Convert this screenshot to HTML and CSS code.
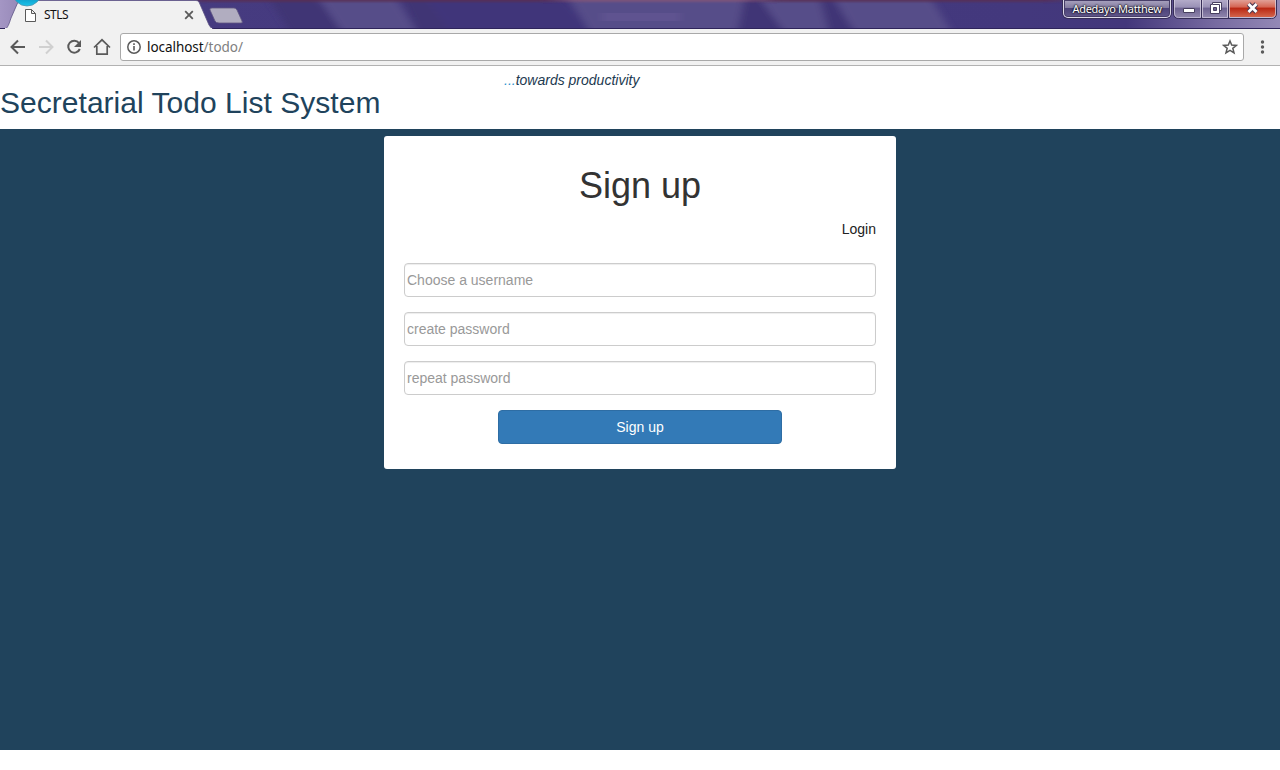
FILE: index.html
```html
<!DOCTYPE html>
<html lang="en">
<head>
<meta charset="utf-8">
<title>STLS</title>
<link rel="stylesheet" href="styles.css">
</head>
<body>
<div class="titlebar">
  <svg class="frame" width="1280" height="29" viewBox="0 0 1280 29">
    <defs>
      <filter id="soft" x="-10%" y="-50%" width="120%" height="200%"><feGaussianBlur stdDeviation="4 0.5"/></filter>
      <filter id="edge" x="-10%" y="-200%" width="120%" height="500%"><feGaussianBlur stdDeviation="12 1.300"/></filter>
      <linearGradient id="base"><stop offset="0" stop-color="#a496c4"/><stop offset=".02" stop-color="#9284b4"/><stop offset=".12" stop-color="#463b80"/><stop offset=".8" stop-color="#43387d"/><stop offset=".88" stop-color="#43377b"/><stop offset=".95" stop-color="#776ba1"/><stop offset="1" stop-color="#9388b6"/></linearGradient>
      <linearGradient id="orb" x2="0" y2="1"><stop offset=".5" stop-color="#0878a8"/><stop offset="1" stop-color="#18c4ec"/></linearGradient>
    </defs>
    <path fill="url(#base)" d="M0 0h1280v29H0z"/>
    <g filter="url(#soft)">
      <path fill="#3f3474" d="M270 0h48l22 29h-52zM402 0h24l22 29h-32z"/>
      <path fill="#41367a" d="M426 0h140l22 29H448z"/>
      <path fill="#574d89" d="M320 0h77l18 29h-75zM570 0h174l4 29H588zM761 0h64l14 29h-58zM835 0h97l18 29h-98z"/>
      <path fill="#403476" d="M744 0h16l22 29h-44zM820 0h13l20 29h-25z"/>
      <path fill="#675798" opacity=".5" d="M602 13h78v8h-78z"/>
    </g>
    <path filter="url(#edge)" fill="#5b2d4f" opacity=".75" d="M190-2h370v4H190zM760-2h300v4H760z"/>
    <path filter="url(#edge)" fill="#925973" opacity=".6" d="M560-2h200v4H560z"/>
    <path fill="#2e245b" d="M0 28h1280v1H0z"/>
    <path fill="#f1f1f1" stroke="#5d5385" stroke-width=".8" d="M4 30C8 28 9 24 11 18L18 2Q19 .5 21 .5H196Q198 .5 199 2L209 25Q211 29 215 30z"/>
    <path fill="#f1f1f1" d="M5 28h207v1H5z"/>
    <circle cx="27" cy="-8.500" r="14.500" fill="url(#orb)" stroke="#4a93ad" stroke-width=".8"/>
    <path fill="#b1adc0" stroke="#605681" stroke-width=".8" d="M212 8h22q2 0 3 2l5 11q1 2-1 2h-22q-3 0-4-2l-5-11q-.8-2 2-2z"/>
    <path fill="#fff" stroke="#5a5a5a" d="M25.500 9.500h6l4 4v8h-10zM31.500 9.500v4h4"/>
    <path fill="none" stroke="#5a5a5a" stroke-width="1.800" d="m185.200 11.200 7.600 7.600m0-7.600-7.600 7.600"/>
  </svg>
  <span class="tab-title">STLS</span>
  <div class="user">Adedayo Matthew</div>
  <svg class="controls" width="107" height="20" viewBox="0 0 107 20">
    <defs>
      <linearGradient id="glass" x2="0" y2="1"><stop stop-color="#b3abc9"/><stop offset=".43" stop-color="#9990b5"/><stop offset=".46" stop-color="#6c6190"/><stop offset="1" stop-color="#8e84ab"/></linearGradient>
      <linearGradient id="red" x2="0" y2="1"><stop stop-color="#e1a096"/><stop offset=".43" stop-color="#d46350"/><stop offset=".46" stop-color="#b82510"/><stop offset="1" stop-color="#d3644b"/></linearGradient>
    </defs>
    <path fill="url(#glass)" d="M2 0h55v17H6q-4 0-4-4z"/>
    <path fill="url(#red)" d="M57 0h48v13q0 4-4 4H57z"/>
    <path fill="none" stroke="#372e58" d="M1.500 0v13q0 5.500 5 5.500h93q5 0 5-5.500V0M29.500 0v18M56.500 0v18"/>
    <path fill="none" stroke="#d8d2e3" d="M2.500 0v13q0 4.500 4 4.500h22V0M30.500 0v17.500h25V0M57.500 0v17.500h42q4 0 4-4.500V0" opacity=".75"/>
    <path fill="#fff" stroke="#484060" d="M11.500 8.500h11v4h-11z"/>
    <path fill="#fff" stroke="#484060" d="M40.500 2.500h9v8h-2v3h-9v-9h2z"/>
    <path fill="none" stroke="#484060" d="M41 4.500h6.500V11"/>
    <path fill="#6c6190" stroke="#484060" d="M41.500 7.500h3v3h-3z"/>
    <path fill="none" stroke="#4b3851" stroke-width="4.800" d="m76.500 4 8 8m0-8-8 8"/>
    <path fill="none" stroke="#fff" stroke-width="2.800" d="m76.500 4 8 8m0-8-8 8"/>
  </svg>
</div>
<div class="toolbar">
  <svg class="nav-icons" width="120" height="36" viewBox="0 29 120 36" fill="none" stroke="#5a5a5a" stroke-width="2">
    <path d="M25 47H12M18 40.500 11.500 47l6.500 6.500"/>
    <path stroke="#d0d0d0" d="M39 47h13M46 40.500l6.500 6.500-6.500 6.500"/>
    <path d="M79 43a6 6 0 1 0 .8 6"/>
    <path fill="#5a5a5a" stroke="none" d="M81 40v7h-7z"/>
    <path stroke-width="1.700" d="M94 47.500l8-7.700 8 7.700M96.800 46v8.200h10.400V46"/>
  </svg>
  <div class="address">
    <svg width="16" height="16" viewBox="0 0 16 16"><circle cx="8" cy="8" r="6.200" fill="none" stroke="#5a5a5a" stroke-width="1.500"/><path fill="#5a5a5a" d="M7.200 4.300h1.600v1.600H7.200zM7.200 7h1.600v4.600H7.200z"/></svg>
    <span class="url">localhost<span class="path">/todo/</span></span>
    <svg class="star" width="16" height="16" viewBox="0 0 16 16"><path fill="none" stroke="#5a5a5a" stroke-width="1.500" d="m8 2 1.700 4.100 4.600.3-3.500 2.900 1.200 4.500L8 11.400l-4 2.400 1.200-4.500-3.500-2.900 4.600-.3z"/></svg>
  </div>
  <svg class="menu" width="36" height="36" viewBox="0 0 36 36" fill="#5a5a5a"><circle cx="18.500" cy="13" r="1.700"/><circle cx="18.500" cy="18" r="1.700"/><circle cx="18.500" cy="23" r="1.700"/></svg>
</div>
<header class="header">
  <h1 class="brand">Secretarial Todo List System</h1>
  <p class="tagline"><span class="dots">...</span>towards productivity</p>
</header>
<main class="content">
  <form class="card">
    <h2 class="card-title">Sign up</h2>
    <a class="login">Login</a>
    <input class="field" type="text" placeholder="Choose a username">
    <input class="field" type="password" placeholder="create password">
    <input class="field" type="password" placeholder="repeat password">
    <button class="submit" type="button">Sign up</button>
  </form>
</main>
</body>
</html>
```

FILE: styles.css
```css
* { box-sizing: border-box; }
body {
  margin: 0;
  height: 770px;
  overflow: hidden;
  background: #fff;
  color: #333;
  font: 14px/20px "Liberation Sans", Arial, sans-serif;
}
.titlebar {
  position: relative;
  display: flex;
  height: 29px;
  padding: 0 1px 0 44px;
  font-family: "Noto Sans", sans-serif;
}
.frame { position: absolute; left: 0; top: 0; }
.tab-title {
  position: relative;
  margin-right: auto;
  padding-top: 5px;
  color: #111;
  font-size: 12px;
  letter-spacing: -0.5px;
}
.user {
  position: relative;
  width: 108px;
  height: 18px;
  margin-right: 1px;
  border: 1px solid #ded9ea;
  border-top: 0;
  border-radius: 0 0 5px 5px;
  box-shadow: 0 0 0 1px #372e58, inset 0 0 0 1px #483f69;
  background: linear-gradient(#aaa4c0 0, #827a9f 8px, #4b4178 8px, #62588b 100%);
  color: #fff;
  font-size: 11px;
  line-height: 18px;
  letter-spacing: -0.3px;
  text-align: center;
  text-shadow: 0 0 2px #000, 0 0 2px #000;
  white-space: nowrap;
}
.controls { position: relative; }
.toolbar {
  display: flex;
  height: 37px;
  border-bottom: 1px solid #b2b2b2;
  background: #f1f1f1;
}
.nav-icons { flex: none; }
.address {
  display: flex;
  align-items: center;
  flex: 1;
  height: 28px;
  margin-top: 4px;
  padding: 0 5px;
  border: 1px solid #a9a9a9;
  border-radius: 3px;
  background: #fff;
}
.url {
  margin-left: 5px;
  color: #111;
  font: 13.5px/20px "Noto Sans", sans-serif;
  letter-spacing: -0.05px;
}
.path { color: #808080; }
.star { margin-left: auto; }
.menu { flex: none; }
.header { display: flex; height: 63px; }
.brand {
  width: 504px;
  margin: 20px 0 0;
  color: #20435c;
  font-size: 30px;
  font-weight: 400;
  line-height: 33px;
  letter-spacing: 0.03px;
}
.tagline { margin: 4px 0 0; color: #1d3a50; font-style: italic; }
.dots { color: #2c92cf; }
.content {
  display: flex;
  justify-content: center;
  align-items: flex-start;
  height: 621px;
  padding-top: 7px;
  background: #20435c;
}
.card {
  display: flex;
  flex-direction: column;
  width: 512px;
  height: 333px;
  padding: 30px 20px 25px;
  border-radius: 3px;
  background: #fff;
}
.card-title {
  margin: 0 0 13px;
  font-size: 36px;
  font-weight: 400;
  line-height: 40px;
  text-align: center;
}
.login { align-self: flex-end; margin-bottom: 24px; color: #222; }
.field {
  width: 100%;
  height: 34px;
  margin: 0 0 15px;
  padding: 0 2px;
  border: 1px solid #ccc;
  border-radius: 4px;
  box-shadow: inset 0 1px 1px rgba(0, 0, 0, .075);
  font: inherit;
}
.field::placeholder { color: #999; }
.submit {
  align-self: center;
  width: 284px;
  height: 34px;
  padding: 0;
  border: 1px solid #2e6da4;
  border-radius: 4px;
  background: #337ab7;
  color: #fff;
  font: inherit;
}
```
